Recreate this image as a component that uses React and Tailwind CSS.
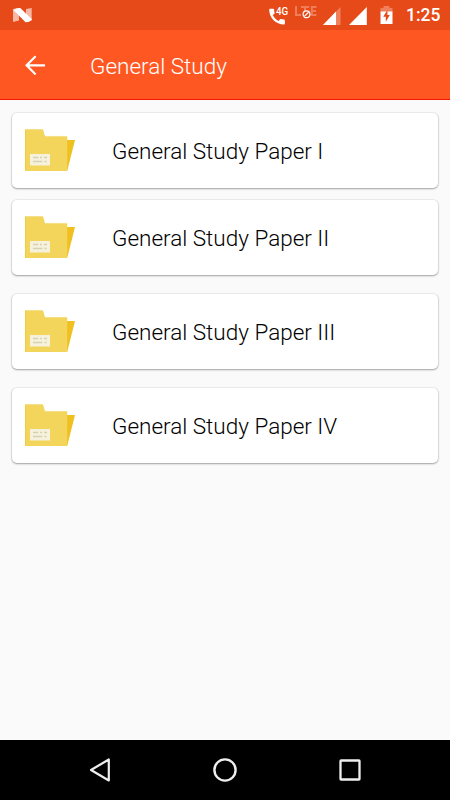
import React from "react";

const papers = [
  { title: "General Study Paper I", gap: "mt-[13px]" },
  { title: "General Study Paper II", gap: "mt-3" },
  { title: "General Study Paper III", gap: "mt-[19px]" },
  { title: "General Study Paper IV", gap: "mt-[19px]" },
];

function Folder() {
  return (
    <svg width="51" height="43" viewBox="0 0 51 43" className="shrink-0">
      <path d="M40 11H50L42.3 41.6H40Z" fill="#efc020" />
      <path d="M0 .3H17.3Q18 .3 18.2 1L20 7.2H42.2V42H0Z" fill="#f3d55b" />
      <path d="M.3 .3V42" stroke="#edc62d" strokeWidth=".7" />
      <path d="M0 .6H17.5M20 7.4H42" stroke="#f7e18a" strokeWidth=".7" />
      <rect x="5" y="25" width="20" height="11.5" fill="#f6f1dc" />
      <path d="M8 28.5h5.3M15 28.5h2M19 28.5h3M8 32.5h9.3M19.5 32.5h2" stroke="#d8d1b0" strokeWidth="1.6" />
    </svg>
  );
}

function StatusBar() {
  return (
    <div className="flex h-[30px] shrink-0 items-center bg-[#e64a19] pr-2.5 pl-[13px] text-white">
      <svg width="20" height="30" viewBox="0 0 20 30">
        <path d="M0 9L6 8V20.5L0 22ZM13 9L18.7 8V20.5L13 22Z" fill="#f6b8a3" />
        <path d="M.4 9.9Q3.8 7.6 7.3 8L19 19.2Q16.8 22.3 12.6 22.2Z" fill="#fff" />
      </svg>
      <svg width="20" height="30" viewBox="0 0 20 30" className="ml-auto">
        <g transform="translate(-2.4 6.2) scale(.87)">
          <path d="M20.01 15.38c-1.23 0-2.42-.2-3.53-.56a.98.98 0 0 0-1.01.24l-1.57 1.97c-2.83-1.35-5.48-3.9-6.89-6.83l1.95-1.66c.27-.28.35-.67.24-1.02-.37-1.11-.56-2.3-.56-3.53 0-.54-.45-.99-.99-.99H4.19C3.65 3 3 3.24 3 3.99 3 13.28 10.73 21 20.01 21c.71 0 .99-.63.99-1.18v-3.45c0-.54-.45-.99-.99-.99z" fill="#fff" />
        </g>
        <text x="7" y="15" fill="#fff" fontFamily="Roboto, sans-serif" fontSize="11" fontWeight="500" textLength="12.2" lengthAdjust="spacingAndGlyphs">4G</text>
      </svg>
      <svg width="23" height="30" viewBox="0 0 23 30" className="ml-1.5">
        <path d="M1 6V15H6M6 7H14M10 6V16M21.5 7H16.8V15H21.5M16 11H21" fill="none" stroke="#f07c59" strokeWidth="2" />
        <circle cx="11.5" cy="14.3" r="3.4" fill="#e64a19" stroke="#fff" strokeWidth="1.2" />
        <path d="M9.4 16.4L13.6 12.2" stroke="#fff" strokeWidth="1.2" />
      </svg>
      <svg width="18" height="30" viewBox="0 0 18 30" className="ml-[5px]">
        <path d="M0 25L17.5 7V25Z" fill="#f0805d" />
        <path d="M0 25L13 11.5V25Z" fill="#fff" />
      </svg>
      <svg width="18" height="30" viewBox="0 0 18 30" className="ml-2">
        <path d="M0 25L17.8 7V25Z" fill="#fff" />
      </svg>
      <svg width="13" height="30" viewBox="0 0 13 30" className="ml-[13px]">
        <path d="M3.5 8V6H9.5V8H12.5V12H.5V8Z" fill="#f0805d" />
        <path d="M.5 11.5H12.5V24H.5Z" fill="#fff" />
        <path d="M7.4 10L3.2 16.7H5.8V21.7L9.8 14.9H7.4Z" fill="#e64a19" />
      </svg>
      <span className="ml-[13px] w-[34px] pt-0.5 text-[17.5px] leading-none font-medium whitespace-nowrap">1:25</span>
    </div>
  );
}

export default function App() {
  return (
    <div className="flex h-[800px] w-[450px] flex-col overflow-hidden bg-[#fafafa] font-[Roboto,sans-serif]">
      <StatusBar />
      <header className="flex h-[70px] shrink-0 items-center border-b border-[#f51606] bg-[#ff5722] pl-[25px] text-white">
        <svg width="21" height="20" viewBox="0 0 21 20" fill="none" stroke="#fff" strokeWidth="2.2">
          <path d="M20 10.3H2M10.6 1.2L1.6 10.3L10.6 19.4" />
        </svg>
        <h1 className="mt-0.5 ml-11 text-[22.5px] leading-7 font-light">General Study</h1>
      </header>
      <main className="flex grow flex-col px-3">
        {papers.map(({ title, gap }) => (
          <button
            key={title}
            className={`flex h-[75px] w-full shrink-0 items-center rounded-[5px] bg-white pl-[13px] text-left shadow-[0_1px_2px_rgba(0,0,0,0.32),0_0_1px_1px_rgba(0,0,0,0.06)] ${gap}`}
          >
            <Folder />
            <span className="ml-[36px] text-[22.5px] leading-7 font-light text-black">{title}</span>
          </button>
        ))}
      </main>
      <nav className="flex h-[60px] shrink-0 items-center justify-between bg-black px-[88px]">
        <svg width="24" height="24" viewBox="0 0 24 24" fill="none" stroke="#eee" strokeWidth="2.2" strokeLinejoin="round">
          <path d="M3 12L20.8 1.5V22.5Z" />
        </svg>
        <svg width="24" height="24" viewBox="0 0 24 24" fill="none" stroke="#eee" strokeWidth="2.4">
          <circle cx="12" cy="12" r="10.6" />
        </svg>
        <svg width="24" height="24" viewBox="0 0 24 24" fill="none" stroke="#eee" strokeWidth="2.3">
          <rect x="2.5" y="2.5" width="19" height="19" rx=".6" />
        </svg>
      </nav>
    </div>
  );
}
